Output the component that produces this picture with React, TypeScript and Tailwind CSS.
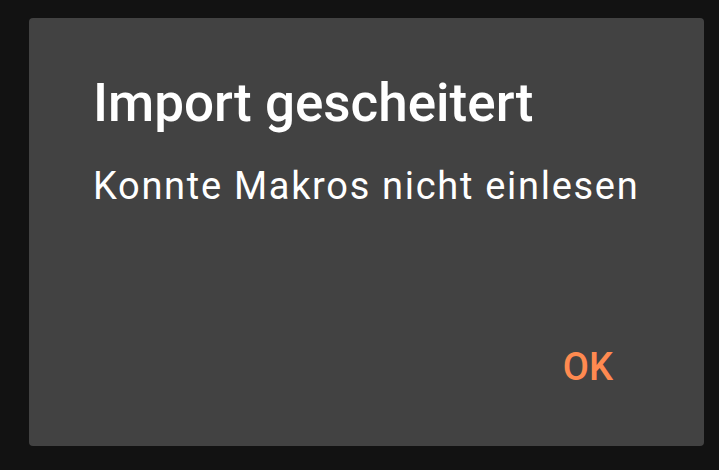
import React from 'react';

const App: React.FC = () => {
  return (
    <div className="h-[470px] w-full bg-[#121212] pt-[18px] pl-[29px] font-['Roboto',sans-serif]">
      <div className="flex w-[675px] h-[428px] flex-col rounded-[4px] bg-[#424242] pl-[64px] pr-[91px] pt-[54px]">
        <h1 className="whitespace-nowrap text-[53px] leading-[62px] font-medium text-white">Import gescheitert</h1>
        <p className="mt-[30px] whitespace-nowrap text-[38px] leading-[44px] tracking-[1.7px] text-white">
          Konnte Makros nicht einlesen
        </p>
        <div className="mt-[136px] flex justify-end">
          <button className="text-[38px] leading-[46px] font-medium text-[#ff8a50]">OK</button>
        </div>
      </div>
    </div>
  );
};

export default App;
